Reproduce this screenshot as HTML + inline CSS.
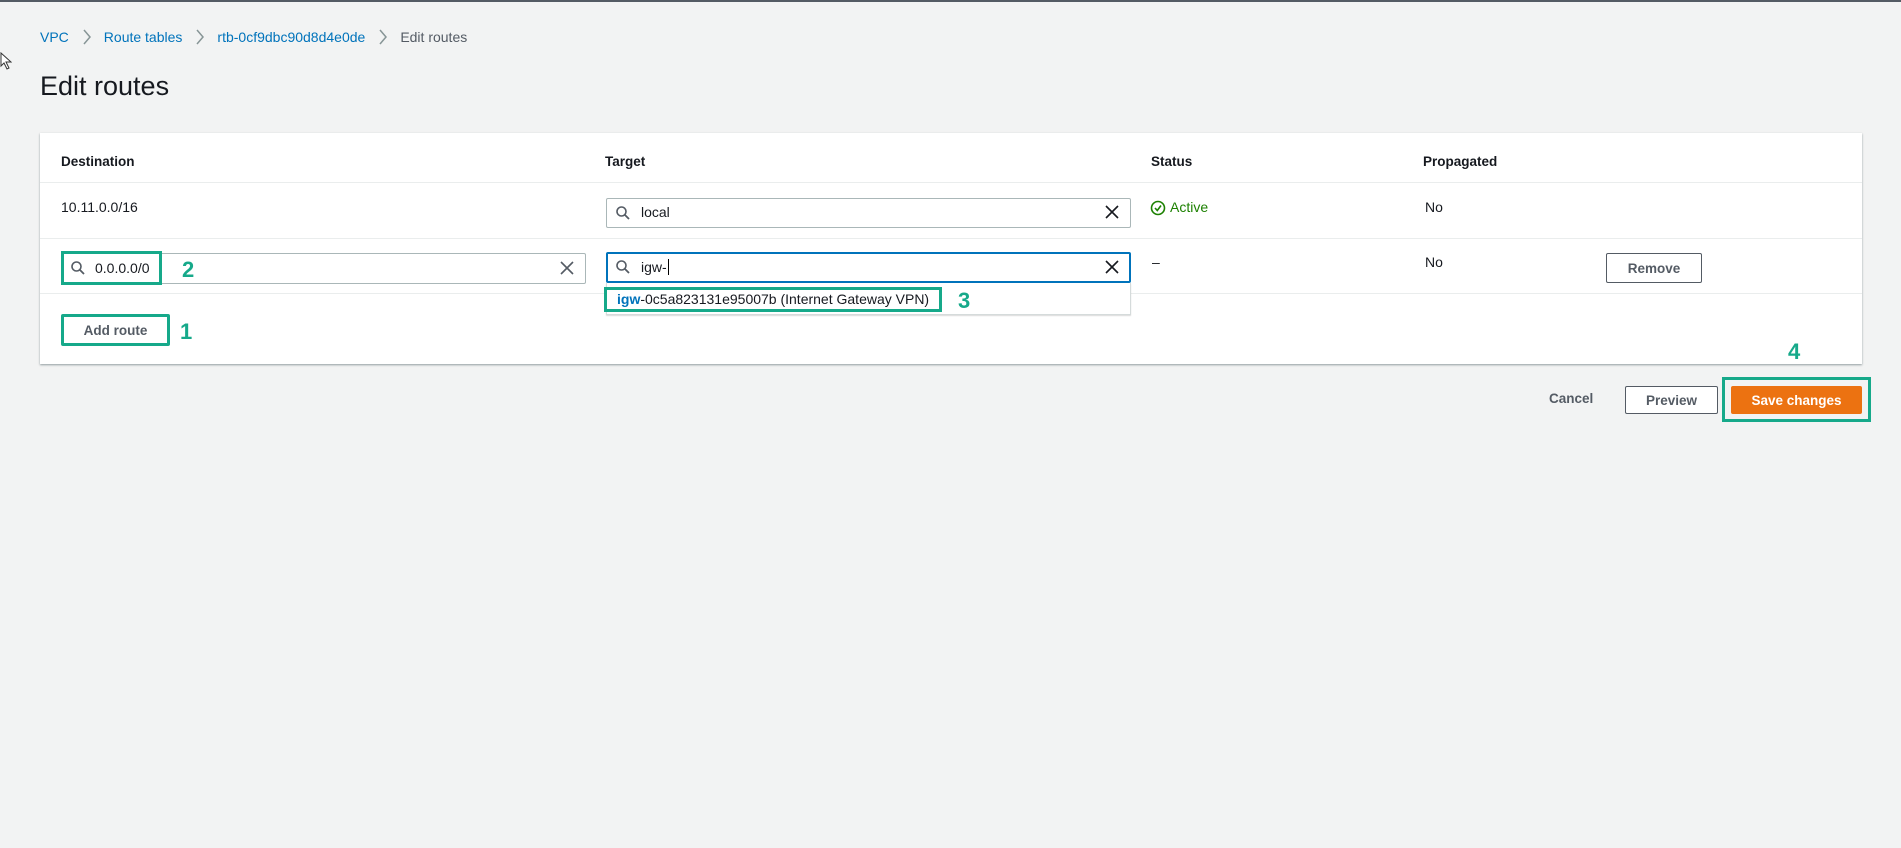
<!DOCTYPE html>
<html><head><meta charset="utf-8"><style>
*{box-sizing:border-box;margin:0;padding:0}
body{width:1901px;height:848px;background:#f2f3f3;font-family:"Liberation Sans",sans-serif;color:#16191f;position:relative;overflow:hidden;font-size:14px}
.a{position:absolute}
.bc{top:28px;left:40px;font-size:14px;color:#0073bb;display:flex;align-items:center;gap:0}
.bc svg{margin:0 12px 0 13px}
h1{position:absolute;left:40px;top:71px;font-size:27px;font-weight:400}
.card{left:40px;top:133px;width:1822px;height:231px;background:#fff;box-shadow:0 1px 2px rgba(0,28,36,.4);}
.hl{position:absolute;left:0;width:1822px;height:1px;background:#eaeded}
.th{font-weight:700;font-size:13.5px;top:154px}
.inp{border:1px solid #aab7b8;border-radius:2px;background:#fff;height:30px}
.g{border:3px solid #16a98a}
.n{color:#16a98a;font-weight:700;font-size:22px}
.btn{border:1px solid #545b64;border-radius:2px;background:#fff;font-weight:700;font-size:13.5px;color:#545b64;display:flex;align-items:center;justify-content:center}
svg{display:block}
</style></head><body>
<div class="a" style="left:0;top:0;width:1901px;height:2px;background:#545b64"></div>
<svg class="a" style="left:0;top:52px" width="12" height="18"><path d="M1 1 L1 14 L4 11 L7 17 L9 16 L6 10 L11 10 Z" fill="#fff" stroke="#333" stroke-width="1"/></svg>
<div class="a bc">VPC<svg width="10" height="18"><path d="M2 2 L8 9 L2 16" fill="none" stroke="#879596" stroke-width="1.5"/></svg>Route tables<svg width="10" height="18"><path d="M2 2 L8 9 L2 16" fill="none" stroke="#879596" stroke-width="1.5"/></svg>rtb-0cf9dbc90d8d4e0de<svg width="10" height="18"><path d="M2 2 L8 9 L2 16" fill="none" stroke="#879596" stroke-width="1.5"/></svg><span style="color:#545b64">Edit routes</span></div>
<h1>Edit routes</h1>
<div class="a card">
<div class="hl" style="top:49px"></div>
<div class="hl" style="top:105px"></div>
<div class="hl" style="top:160px"></div>
</div>
<div class="a th" style="left:61px">Destination</div>
<div class="a th" style="left:605px">Target</div>
<div class="a th" style="left:1151px">Status</div>
<div class="a th" style="left:1423px">Propagated</div>
<div class="a" style="left:61px;top:199px">10.11.0.0/16</div>
<div class="a inp" style="left:606px;top:198px;width:525px"></div>
<svg class="a" style="left:615px;top:205px" width="16" height="16"><circle cx="6.5" cy="6.5" r="4.5" fill="none" stroke="#545b64" stroke-width="1.6"/><path d="M10 10 L14 14" stroke="#545b64" stroke-width="1.8"/></svg>
<div class="a" style="left:641px;top:204px">local</div>
<svg class="a" style="left:1104px;top:204px" width="16" height="16"><path d="M2 2 L14 14 M14 2 L2 14" stroke="#16191f" stroke-width="1.6"/></svg>
<svg class="a" style="left:1150px;top:200px" width="16" height="16"><circle cx="8" cy="8" r="6.5" fill="none" stroke="#1d8102" stroke-width="1.6"/><path d="M5 8 L7.3 10.5 L11 5.5" fill="none" stroke="#1d8102" stroke-width="1.6"/></svg>
<div class="a" style="left:1170px;top:199px;color:#1d8102">Active</div>
<div class="a" style="left:1425px;top:199px">No</div>
<div class="a inp" style="left:61px;top:253px;width:525px;height:31px"></div>
<svg class="a" style="left:70px;top:260px" width="16" height="16"><circle cx="6.5" cy="6.5" r="4.5" fill="none" stroke="#545b64" stroke-width="1.6"/><path d="M10 10 L14 14" stroke="#545b64" stroke-width="1.8"/></svg>
<div class="a" style="left:95px;top:260px">0.0.0.0/0</div>
<div class="a g" style="left:61px;top:251px;width:101px;height:34px"></div>
<div class="a n" style="left:182px;top:257px">2</div>
<svg class="a" style="left:559px;top:260px" width="16" height="16"><path d="M2 2 L14 14 M14 2 L2 14" stroke="#545b64" stroke-width="1.6"/></svg>
<div class="a inp" style="left:606px;top:252px;width:525px;height:31px;border:2px solid #0073bb"></div>
<svg class="a" style="left:615px;top:259px" width="16" height="16"><circle cx="6.5" cy="6.5" r="4.5" fill="none" stroke="#545b64" stroke-width="1.6"/><path d="M10 10 L14 14" stroke="#545b64" stroke-width="1.8"/></svg>
<div class="a" style="left:641px;top:259px">igw-<span style="border-left:1px solid #000;margin-left:1px"></span></div>
<svg class="a" style="left:1104px;top:259px" width="16" height="16"><path d="M2 2 L14 14 M14 2 L2 14" stroke="#16191f" stroke-width="1.6"/></svg>
<div class="a" style="left:606px;top:283px;width:525px;height:32px;background:#fff;border:1px solid #d5dbdb;border-top:none;box-shadow:0 1px 1px rgba(0,0,0,.15)"></div>
<div class="a" style="left:617px;top:291px;font-size:14px"><b style="color:#0073bb">igw</b>-0c5a823131e95007b (Internet Gateway VPN)</div>
<div class="a g" style="left:604px;top:287px;width:338px;height:25px"></div>
<div class="a n" style="left:958px;top:288px">3</div>
<div class="a" style="left:1152px;top:254px">–</div>
<div class="a" style="left:1425px;top:254px">No</div>
<div class="a btn" style="left:1606px;top:253px;width:96px;height:30px">Remove</div>
<div class="a btn" style="left:61px;top:314px;width:109px;height:32px;border:3px solid #16a98a">Add route</div>
<div class="a n" style="left:180px;top:319px">1</div>
<div class="a n" style="left:1788px;top:339px">4</div>
<div class="a" style="left:1549px;top:391px;font-weight:700;font-size:13.5px;color:#545b64">Cancel</div>
<div class="a btn" style="left:1625px;top:386px;width:93px;height:28px">Preview</div>
<div class="a btn" style="left:1731px;top:386px;width:131px;height:28px;background:#ec7211;border-color:#ec7211;color:#fff">Save changes</div>
<div class="a g" style="left:1722px;top:377px;width:149px;height:45px"></div>
</body></html>
